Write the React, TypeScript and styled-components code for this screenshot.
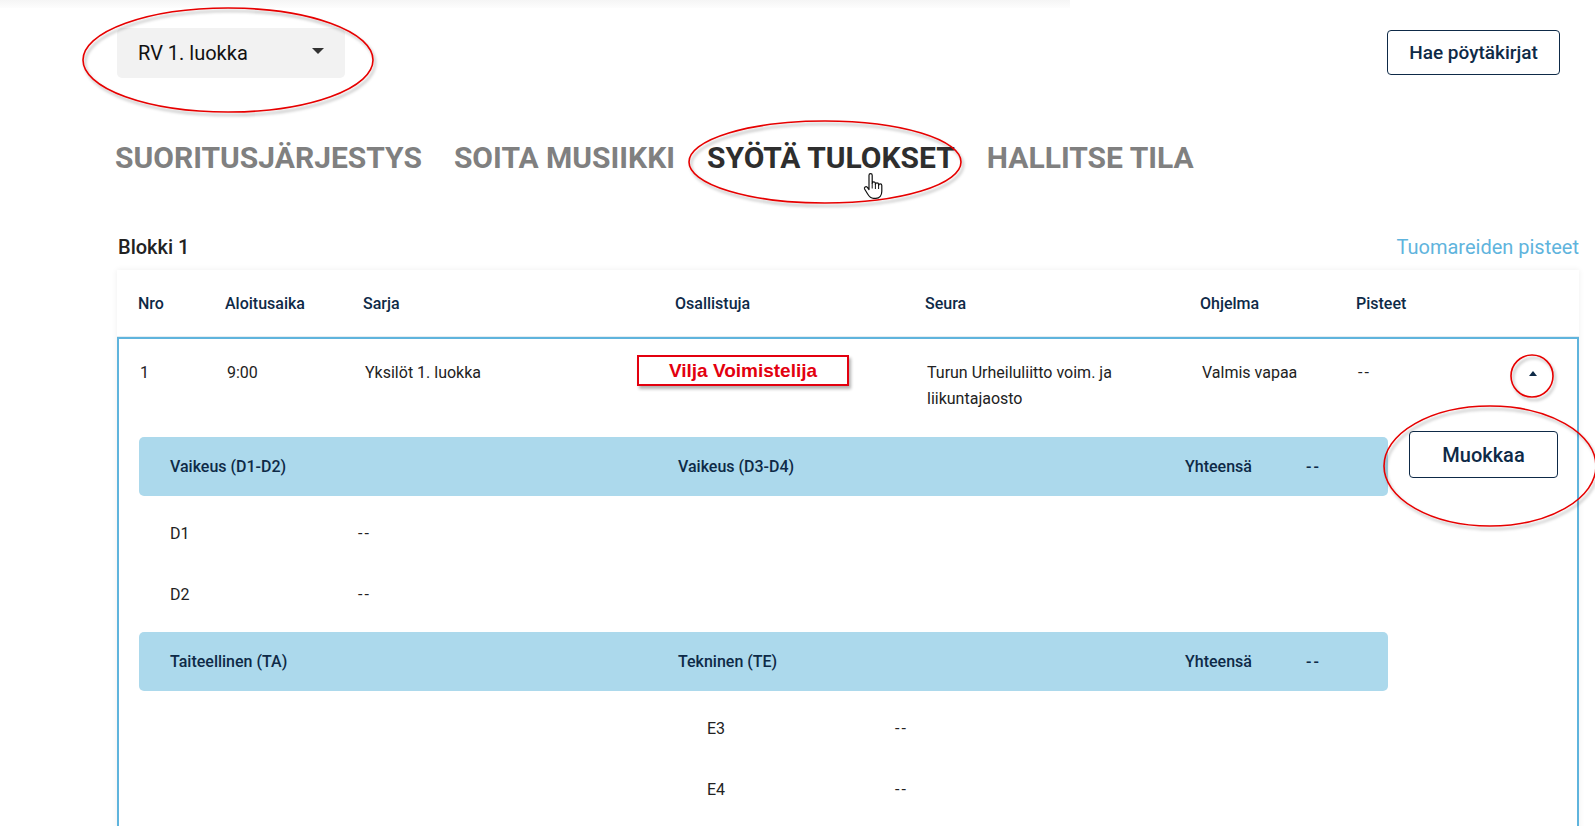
import React from 'react';
import styled, { createGlobalStyle } from 'styled-components';

const navy = '#0e2a47';
const lightBlue = '#acd9ec';
const borderBlue = '#5fb4dd';

const GlobalStyle = createGlobalStyle`
  html, body {
    margin: 0;
    padding: 0;
    background: #fff;
    font-family: Roboto, "Liberation Sans", Arial, sans-serif;
    color: #222;
  }
  * { box-sizing: border-box; }
`;

const Page = styled.div`
  position: relative;
  width: 1595px;
  height: 826px;
  overflow: hidden;
  padding: 0 16px 0 117px;
`;

const TopShade = styled.div`
  width: 1070px;
  height: 8px;
  margin-left: -117px;
  background: linear-gradient(to bottom, #f5f5f5, #fdfdfd);
`;

const TopBar = styled.div`
  display: flex;
  justify-content: space-between;
  align-items: flex-start;
  margin-top: 20px;
  padding-right: 19px;
`;

const Select = styled.div`
  width: 228px;
  height: 50px;
  display: flex;
  align-items: center;
  justify-content: space-between;
  padding: 0 21px;
  background: #f2f2f2;
  border-radius: 5px;
  font-size: 20px;
  color: #111;
`;

const Caret = styled.span<{ up?: boolean }>`
  width: 0;
  height: 0;
  border-left: ${p => (p.up ? 4 : 6)}px solid transparent;
  border-right: ${p => (p.up ? 4 : 6)}px solid transparent;
  ${p => (p.up ? `border-bottom: 5px solid ${navy};` : 'border-top: 6px solid #333;')}
  margin-top: ${p => (p.up ? 0 : -4)}px;
`;

const OutlineButton = styled.button<{ size: number; w: number; h: number }>`
  width: ${p => p.w}px;
  height: ${p => p.h}px;
  background: #fff;
  border: 1px solid ${navy};
  border-radius: 4px;
  color: ${navy};
  font-family: inherit;
  font-size: ${p => p.size}px;
  font-weight: 500;
  padding: 0;
  margin-top: ${p => (p.size === 19 ? 2 : 0)}px;
  cursor: pointer;
`;

const Tabs = styled.div`
  display: flex;
  gap: 32px;
  margin: 62px 0 0 -2px;
`;

const Tab = styled.div<{ active?: boolean }>`
  font-size: 30px;
  line-height: 36px;
  font-weight: 700;
  color: ${p => (p.active ? '#2e2e2e' : '#808080')};
`;

const SectionHead = styled.div`
  display: flex;
  justify-content: space-between;
  align-items: baseline;
  margin-top: 59px;
  height: 35px;
`;

const BlockTitle = styled.div`
  font-size: 20px;
  line-height: 24px;
  font-weight: 500;
  color: #222;
  padding-left: 1px;
`;

const JudgesLink = styled.a`
  font-size: 20px;
  line-height: 24px;
  color: ${borderBlue};
  text-decoration: none;
`;

const Card = styled.div`
  background: #fff;
  box-shadow: 0 0 6px rgba(0, 0, 0, 0.07);
  height: 600px;
`;

const columns = '87px 138px 312px 250px 275px 156px 1fr 46px';

const HeadRow = styled.div`
  display: grid;
  grid-template-columns: ${columns};
  align-items: center;
  height: 67px;
  padding: 0 21px;
  border-bottom: 1px solid #e4edf2;
  font-size: 16px;
  font-weight: 500;
  color: ${navy};
`;

const Expanded = styled.div`
  border: 2px solid ${borderBlue};
  border-bottom: none;
  height: 600px;
`;

const MainRow = styled.div`
  display: grid;
  grid-template-columns: ${columns};
  padding: 21px 21px 19px 21px;
  font-size: 16px;
  line-height: 26px;
  color: #222;
`;

const Cell = styled.div`
  position: relative;
`;

const Dash = styled.span`
  letter-spacing: 2px;
`;

const ToggleCell = styled.div`
  display: flex;
  justify-content: center;
  align-items: center;
  height: 26px;
`;

const Redaction = styled.div`
  position: absolute;
  left: -40px;
  top: -5px;
  width: 212px;
  height: 31px;
  display: flex;
  align-items: center;
  justify-content: center;
  background: #fff;
  border: 2px solid #e3000f;
  box-shadow: 2px 3px 3px rgba(0, 0, 0, 0.3);
  font-family: "Liberation Sans", Arial, sans-serif;
  font-weight: 700;
  font-size: 19px;
  color: #e3000f;
`;

const Details = styled.div`
  display: flex;
  align-items: flex-start;
  gap: 21px;
  padding: 0 19px 0 20px;
`;

const Scores = styled.div`
  flex: 1;
  padding-top: 6px;
`;

const Bar = styled.div`
  display: grid;
  grid-template-columns: 508px 507px 121px 1fr;
  align-items: center;
  height: 59px;
  padding-left: 31px;
  border-radius: 5px;
  background: ${lightBlue};
  font-size: 16px;
  font-weight: 500;
  color: ${navy};
`;

const SubRows = styled.div`
  padding: 7px 0;
`;

const SubRow = styled.div<{ indent: number }>`
  display: grid;
  grid-template-columns: 188px 1fr;
  align-items: center;
  height: 61px;
  padding-left: ${p => 31 + p.indent}px;
  font-size: 16px;
  color: #222;
`;

const Overlay = styled.svg`
  position: absolute;
  left: 0;
  top: 0;
  pointer-events: none;
`;

const HandCursor = styled.svg`
  position: absolute;
  left: 862px;
  top: 172px;
  pointer-events: none;
`;

const headers = ['Nro', 'Aloitusaika', 'Sarja', 'Osallistuja', 'Seura', 'Ohjelma', 'Pisteet', ''];

const rings = [
  { cx: 228, cy: 60, rx: 145, ry: 52 },
  { cx: 825, cy: 162, rx: 136, ry: 41 },
  { cx: 1532, cy: 376, rx: 21, ry: 21 },
  { cx: 1490, cy: 466, rx: 106, ry: 60 },
];

export default function App() {
  return (
    <>
      <GlobalStyle />
      <Page>
        <TopShade />
        <TopBar>
          <Select>
            RV 1. luokka
            <Caret />
          </Select>
          <OutlineButton size={19} w={173} h={45}>Hae pöytäkirjat</OutlineButton>
        </TopBar>

        <Tabs>
          <Tab>SUORITUSJÄRJESTYS</Tab>
          <Tab>SOITA MUSIIKKI</Tab>
          <Tab active>SYÖTÄ TULOKSET</Tab>
          <Tab>HALLITSE TILA</Tab>
        </Tabs>

        <SectionHead>
          <BlockTitle>Blokki 1</BlockTitle>
          <JudgesLink href="#">Tuomareiden pisteet</JudgesLink>
        </SectionHead>

        <Card>
          <HeadRow>
            {headers.map((h, i) => <div key={i}>{h}</div>)}
          </HeadRow>
          <Expanded>
            <MainRow>
              <Cell>1</Cell>
              <Cell>9:00</Cell>
              <Cell>Yksilöt 1. luokka</Cell>
              <Cell>
                <Redaction>Vilja Voimistelija</Redaction>
              </Cell>
              <Cell>Turun Urheiluliitto voim. ja<br />liikuntajaosto</Cell>
              <Cell>Valmis vapaa</Cell>
              <Cell><Dash>--</Dash></Cell>
              <ToggleCell><Caret up /></ToggleCell>
            </MainRow>

            <Details>
              <Scores>
                <Bar>
                  <div>Vaikeus (D1-D2)</div>
                  <div>Vaikeus (D3-D4)</div>
                  <div>Yhteensä</div>
                  <Dash>--</Dash>
                </Bar>
                <SubRows>
                  <SubRow indent={0}><div>D1</div><Dash>--</Dash></SubRow>
                  <SubRow indent={0}><div>D2</div><Dash>--</Dash></SubRow>
                </SubRows>
                <Bar>
                  <div>Taiteellinen (TA)</div>
                  <div>Tekninen (TE)</div>
                  <div>Yhteensä</div>
                  <Dash>--</Dash>
                </Bar>
                <SubRows>
                  <SubRow indent={537}><div>E3</div><Dash>--</Dash></SubRow>
                  <SubRow indent={537}><div>E4</div><Dash>--</Dash></SubRow>
                </SubRows>
              </Scores>
              <OutlineButton size={20} w={149} h={47}>Muokkaa</OutlineButton>
            </Details>
          </Expanded>
        </Card>

        <Overlay width="1595" height="826" viewBox="0 0 1595 826">
          <defs>
            <filter id="ringShadow" x="-10%" y="-10%" width="130%" height="130%">
              <feDropShadow dx="2" dy="3" stdDeviation="1.5" floodColor="#000" floodOpacity="0.3" />
            </filter>
          </defs>
          {rings.map((r, i) => (
            <ellipse key={i} {...r} fill="none" stroke="#e60000" strokeWidth="1.6" filter="url(#ringShadow)" />
          ))}
        </Overlay>

        <HandCursor width="22" height="28" viewBox="0 0 22 28">
          <path
            d="M7 3.2a1.6 1.6 0 0 1 3.2 0v8.3a1.6 1.6 0 0 1 3.2 0v1a1.6 1.6 0 0 1 3.2 0v1a1.6 1.6 0 0 1 3.2 0v5.8c0 4-2.2 7-6 7h-2.3c-3 0-4.3-1.8-6-4.6L2.6 17a1.6 1.6 0 0 1 2.6-1.8L7 17.6z"
            fill="#fff"
            stroke="#111"
            strokeWidth="1.2"
            strokeLinejoin="round"
          />
          <path d="M10.2 11.5v5M13.4 12.5v4.5M16.6 13.5v3.5" stroke="#111" strokeWidth="1" />
        </HandCursor>
      </Page>
    </>
  );
}
